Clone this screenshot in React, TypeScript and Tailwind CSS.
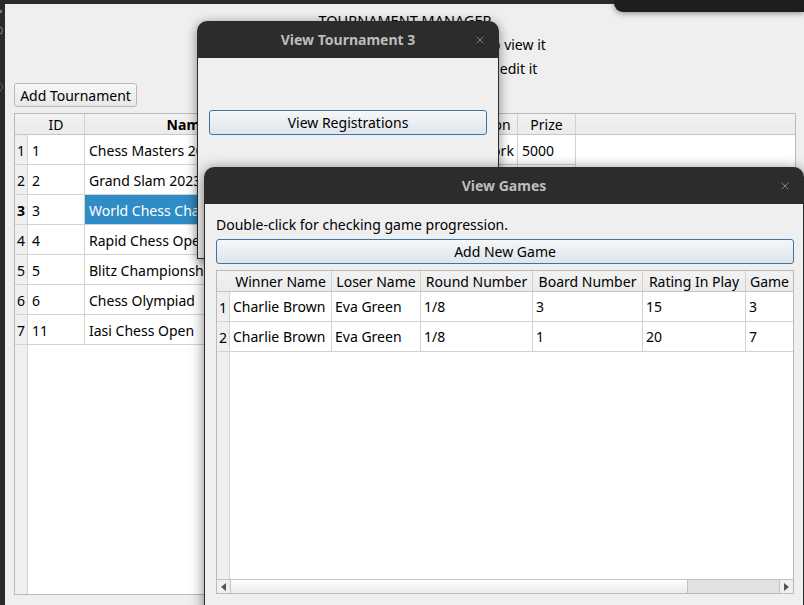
import { X } from 'lucide-react'

interface Col {
  label: string
  w: string
  bold?: boolean
}

const mainCols: Col[] = [
  { label: 'ID', w: 'w-[57px]' },
  { label: 'Name', w: 'w-[206px]', bold: true },
  { label: 'Date', w: 'w-[157px]' },
  { label: 'Location', w: 'w-[70px]' },
  { label: 'Prize', w: 'w-[58px]' },
]

const tournaments = [
  ['1', 'Chess Masters 2023', '2023-05-10', 'New York', '5000'],
  ['2', 'Grand Slam 2023', '2023-06-15', 'London', '7000'],
  ['3', 'World Chess Championship', '2023-07-20', 'Dubai', '10000'],
  ['4', 'Rapid Chess Open', '2023-08-05', 'Berlin', '3000'],
  ['5', 'Blitz Championship', '2023-09-12', 'Paris', '2500'],
  ['6', 'Chess Olympiad', '2023-10-01', 'Chennai', '8000'],
  ['11', 'Iasi Chess Open', '2024-03-02', 'Iasi', '1500'],
]

const gameCols: Col[] = [
  { label: 'Winner Name', w: 'w-[102px]' },
  { label: 'Loser Name', w: 'w-[89px]' },
  { label: 'Round Number', w: 'w-[112px]' },
  { label: 'Board Number', w: 'w-[110px]' },
  { label: 'Rating In Play', w: 'w-[103px]' },
  { label: 'Game', w: 'w-[48px]' },
]

const games = [
  ['Charlie Brown', 'Eva Green', '1/8', '3', '15', '3'],
  ['Charlie Brown', 'Eva Green', '1/8', '1', '20', '7'],
]

function TitleBar({ title, rounded }: { title: string; rounded: string }) {
  return (
    <div className={`h-[37px] shrink-0 bg-[#2c2c2c] ${rounded} flex items-center justify-center relative`}>
      <span className="text-[14px] font-bold text-[#bdbdbd]">{title}</span>
      <X size={12} strokeWidth={1.4} className="absolute right-[13px] top-[13px] text-[#a8a8a8]" />
    </div>
  )
}

function QtButton({ children, className }: { children: React.ReactNode; className: string }) {
  return (
    <div
      className={`h-[25px] rounded-[3px] border border-[#3a75a8] bg-gradient-to-b from-[#f5f7f9] to-[#dfe5ea] flex items-center justify-center text-[14px] ${className}`}
    >
      {children}
    </div>
  )
}

function HeaderRow({ cols, cornerW, h }: { cols: Col[]; cornerW: string; h: string }) {
  return (
    <div className={`flex ${h} shrink-0 bg-gradient-to-b from-[#f2f2f2] to-[#ebebeb] border-b border-[#c6c6c6]`}>
      <div className={`${cornerW} shrink-0`} />
      {cols.map(c => (
        <div
          key={c.label}
          className={`${c.w} shrink-0 border-r border-[#d2d2d2] flex items-center justify-center whitespace-nowrap overflow-hidden ${c.bold ? 'font-bold' : ''}`}
        >
          {c.label}
        </div>
      ))}
    </div>
  )
}

export default function App() {
  return (
    <div className="w-[804px] h-[605px] relative overflow-hidden bg-[#2a2a2a] font-['Noto_Sans',sans-serif] text-[14px] text-black">
      {/* desktop bits on the left edge */}
      <div className="absolute left-0 top-[10px] w-[2px] h-[3px] bg-[#777]" />
      <div className="absolute left-[-6px] top-[26px] w-[9px] h-[9px] rounded-full border border-[#888]" />
      <div className="absolute left-[-7px] top-[82px] w-[10px] h-[10px] rounded-full border border-[#3d7a3d]" />

      {/* main window */}
      <div className="absolute left-[5px] top-[4px] right-0 bottom-0 bg-[#efefef] flex flex-col pl-[9px] pr-[8px]">
        <div className="mt-[6px] h-[20px] leading-[20px] text-center text-[14.5px]">TOURNAMENT MANAGER</div>
        <div className="mt-[5px] h-[20px] leading-[20px] text-center pl-[24px]">Double-click on a tournament to view it</div>
        <div className="mt-[4px] h-[20px] leading-[20px] text-center pl-[24px]">Right-click on a tournament to edit it</div>
        <div className="mt-[4px] h-[24px] w-[123px] rounded-[3px] border border-[#b9b9b9] bg-gradient-to-b from-[#f7f7f7] to-[#e8e8e8] flex items-center justify-center">
          Add Tournament
        </div>
        <div className="mt-[6px] h-[482px] w-[782px] border border-[#bababa] bg-white flex flex-col overflow-hidden">
          <HeaderRow cols={mainCols} cornerW="w-[13px]" h="h-[21px]" />
          {tournaments.map((r, i) => (
            <div key={i} className="flex h-[30px] shrink-0">
              <div
                className={`w-[13px] shrink-0 bg-[#efefef] border-r border-b border-[#d2d2d2] flex items-center justify-center pt-[2px] ${i === 2 ? 'font-bold' : ''}`}
              >
                {i + 1}
              </div>
              {mainCols.map((c, j) => (
                <div
                  key={j}
                  className={`${c.w} shrink-0 border-r border-b border-[#d2d2d2] flex items-center pl-[4px] pt-[1px] whitespace-nowrap overflow-hidden ${
                    i === 2 && j === 1 ? 'bg-[#308cc6] text-white' : ''
                  }`}
                >
                  {r[j]}
                </div>
              ))}
            </div>
          ))}
          <div className="flex-1 flex">
            <div className="w-[13px] bg-[#efefef] border-r border-[#d2d2d2]" />
          </div>
        </div>
      </div>

      {/* window peeking at top right */}
      <div className="absolute left-[614px] top-0 right-0 h-[12px] bg-[#1e1e1e] rounded-bl-[9px] shadow-[0_1px_6px_rgba(0,0,0,0.45)]" />

      {/* View Tournament dialog */}
      <div className="absolute left-[197px] top-[21px] w-[302px] h-[238px] flex flex-col rounded-t-[10px] shadow-[0_2px_12px_rgba(0,0,0,0.45)]">
        <TitleBar title="View Tournament 3" rounded="rounded-t-[10px]" />
        <div className="flex-1 bg-[#efefef] border-x border-b border-[#2c2c2c] pl-[11px] pt-[52px]">
          <QtButton className="w-[278px]">View Registrations</QtButton>
        </div>
      </div>

      {/* View Games dialog */}
      <div className="absolute left-[204px] top-[167px] w-[600px] h-[450px] flex flex-col rounded-t-[10px] shadow-[0_2px_14px_rgba(0,0,0,0.5)]">
        <TitleBar title="View Games" rounded="rounded-t-[10px]" />
        <div className="flex-1 bg-[#efefef] border-x border-[#2c2c2c] pl-[11px] pt-[11px] flex flex-col">
          <div className="h-[20px] leading-[20px]">Double-click for checking game progression.</div>
          <QtButton className="mt-[4px] w-[578px]">Add New Game</QtButton>
          <div className="mt-[6px] w-[578px] h-[324px] border border-[#bababa] bg-white flex flex-col overflow-hidden">
            <HeaderRow cols={gameCols} cornerW="w-[13px]" h="h-[21px]" />
            {games.map((r, i) => (
              <div key={i} className="flex h-[30px] shrink-0">
                <div className="w-[13px] shrink-0 bg-[#efefef] border-r border-b border-[#d2d2d2] flex items-center justify-center pt-[2px]">
                  {i + 1}
                </div>
                {gameCols.map((c, j) => (
                  <div
                    key={j}
                    className={`${c.w} shrink-0 border-r border-b border-[#d2d2d2] flex items-center pl-[3px] whitespace-nowrap overflow-hidden`}
                  >
                    {r[j]}
                  </div>
                ))}
              </div>
            ))}
            <div className="flex-1 flex">
              <div className="w-[13px] bg-[#efefef] border-r border-[#d2d2d2]" />
            </div>
            {/* horizontal scrollbar */}
            <div className="h-[14px] shrink-0 flex border-t border-[#c2c2c2] bg-[#efefef]">
              <div className="w-[14px] shrink-0 border-r border-[#c2c2c2] flex items-center justify-center">
                <svg width="5" height="8" viewBox="0 0 5 8">
                  <path d="M5 0 L0 4 L5 8 Z" fill="#555" />
                </svg>
              </div>
              <div className="w-[457px] shrink-0 border-r border-[#c2c2c2] bg-gradient-to-b from-[#fdfdfd] to-[#ececec]" />
              <div className="flex-1 bg-[#e2e2e2]" />
              <div className="w-[14px] shrink-0 border-l border-[#c2c2c2] flex items-center justify-center">
                <svg width="5" height="8" viewBox="0 0 5 8">
                  <path d="M0 0 L5 4 L0 8 Z" fill="#555" />
                </svg>
              </div>
            </div>
          </div>
        </div>
      </div>
    </div>
  )
}
